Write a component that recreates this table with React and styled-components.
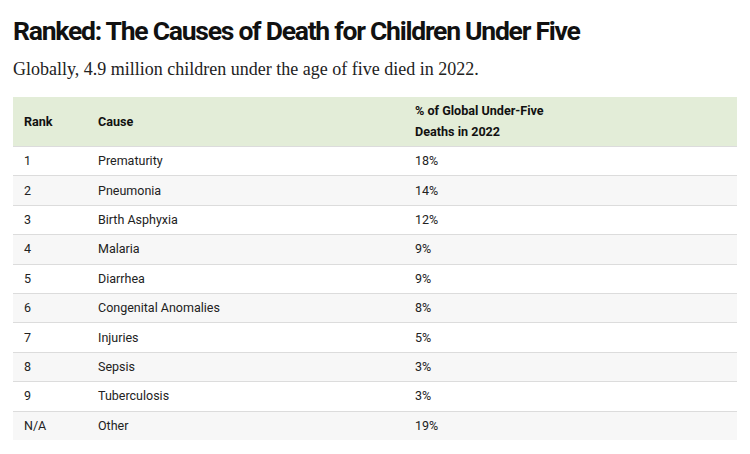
import React from "react";
import styled, { createGlobalStyle } from "styled-components";

const GlobalStyle = createGlobalStyle`
  body {
    margin: 0;
    background: #fff;
    color: #111;
  }
`;

const rows = [
  ["1", "Prematurity", "18%"],
  ["2", "Pneumonia", "14%"],
  ["3", "Birth Asphyxia", "12%"],
  ["4", "Malaria", "9%"],
  ["5", "Diarrhea", "9%"],
  ["6", "Congenital Anomalies", "8%"],
  ["7", "Injuries", "5%"],
  ["8", "Sepsis", "3%"],
  ["9", "Tuberculosis", "3%"],
  ["N/A", "Other", "19%"],
];

const App = () => {
  return (
    <>
      <GlobalStyle />
      <Page>
        <Title>Ranked: The Causes of Death for Children Under Five</Title>
        <Subtitle>Globally, 4.9 million children under the age of five died in 2022.</Subtitle>
        <Table>
          <colgroup>
            <col style={{ width: 74 }} />
            <col style={{ width: 317 }} />
            <col />
          </colgroup>
          <thead>
            <tr>
              <Th>Rank</Th>
              <Th>Cause</Th>
              <Th>
                % of Global Under-Five
                <br />
                Deaths in 2022
              </Th>
            </tr>
          </thead>
          <tbody>
            {rows.map(([rank, cause, pct], i) => (
              <Row key={rank} $alt={i % 2 === 1}>
                <Td>{rank}</Td>
                <Td>{cause}</Td>
                <Td>{pct}</Td>
              </Row>
            ))}
          </tbody>
        </Table>
      </Page>
    </>
  );
};

export default App;

const Page = styled.div`
  padding: 14px 13px 0 13px;
  width: 724px;
`;

const Title = styled.h1`
  margin: 0;
  font-family: "Roboto", sans-serif;
  font-weight: 700;
  font-size: 26.5px;
  line-height: 34px;
  letter-spacing: -1.25px;
  color: #111;
`;

const Subtitle = styled.p`
  margin: 8px 0 0 0;
  font-family: "Liberation Serif", serif;
  font-size: 18px;
  line-height: 26px;
  color: #222;
`;

const Table = styled.table`
  margin-top: 15px;
  width: 724px;
  table-layout: fixed;
  border-collapse: collapse;
  font-family: "Roboto", sans-serif;
`;

const Th = styled.th`
  background: #e3edd8;
  text-align: left;
  font-size: 12.6px;
  font-weight: 700;
  line-height: 21px;
  padding: 3px 11px 4px 11px;
  height: 42px;
  color: #111;
`;

const Row = styled.tr`
  background: ${(p) => (p.$alt ? "#f7f7f7" : "#fff")};
  border-top: 1px solid #dcdcdc;
`;

const Td = styled.td`
  font-size: 12.5px;
  line-height: 16px;
  height: 28.4px;
  padding: 0 11px;
  color: #222;
`;
